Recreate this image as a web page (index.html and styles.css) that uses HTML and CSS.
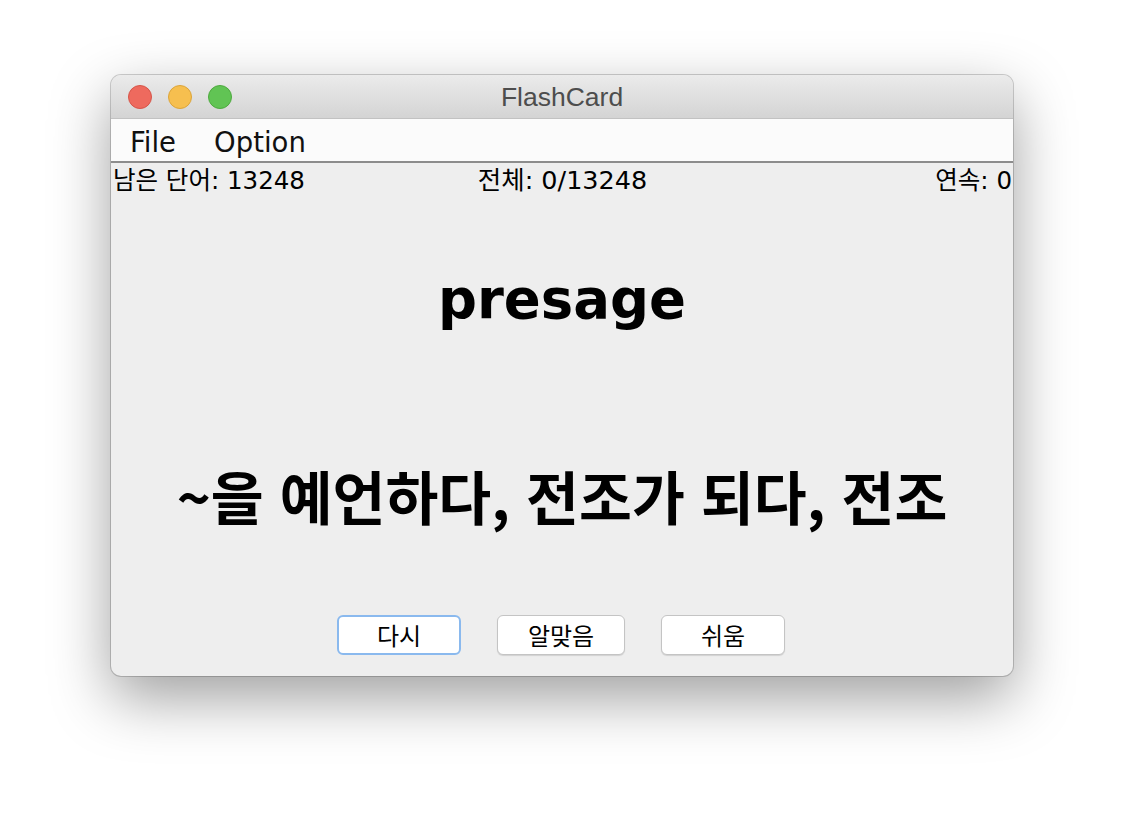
FILE: index.html
```html
<!DOCTYPE html>
<html lang="ko">
<head>
<meta charset="utf-8">
<title>FlashCard</title>
<link rel="stylesheet" href="styles.css">
</head>
<body>
<div class="window">
  <div class="titlebar">
    <div class="lights">
      <span class="light red"></span>
      <span class="light yellow"></span>
      <span class="light green"></span>
    </div>
    <div class="title">FlashCard</div>
  </div>
  <div class="menubar">
    <span class="menu">File</span>
    <span class="menu">Option</span>
  </div>
  <div class="content">
    <div class="status">
      <span class="st-left">남은 단어: 13248</span>
      <span class="st-mid">전체: 0/13248</span>
      <span class="st-right">연속: 0</span>
    </div>
    <div class="word">presage</div>
    <div class="meaning">~을 예언하다, 전조가 되다, 전조</div>
    <div class="buttons">
      <button class="btn focused">다시</button>
      <button class="btn wide">알맞음</button>
      <button class="btn">쉬움</button>
    </div>
  </div>
</div>
</body>
</html>
```

FILE: styles.css
```css
html, body {
  margin: 0;
  padding: 0;
  background: #ffffff;
}
body {
  width: 1124px;
  height: 824px;
  overflow: hidden;
  font-family: "DejaVu Sans", "Noto Sans CJK KR", sans-serif;
}
.window {
  margin: 75px 0 0 111px;
  width: 902px;
  height: 601px;
  border-radius: 10px;
  overflow: hidden;
  background: #eeeeee;
  box-shadow: 0 0 0 1px rgba(0,0,0,0.18), 0 22px 60px rgba(0,0,0,0.38);
  display: flex;
  flex-direction: column;
}
.titlebar {
  height: 44px;
  flex: none;
  background: linear-gradient(#ebebeb, #d4d4d4);
  border-bottom: 1px solid #c2c2c2;
  box-sizing: border-box;
  display: grid;
  grid-template-columns: 1fr auto 1fr;
  align-items: center;
}
.lights {
  display: flex;
  gap: 16px;
  padding-left: 17px;
}
.light {
  width: 24px;
  height: 24px;
  border-radius: 50%;
  box-sizing: border-box;
}
.red { background: #ee6a5e; border: 1px solid #d55549; }
.yellow { background: #f6bf4f; border: 1px solid #dba43a; }
.green { background: #61c454; border: 1px solid #4ea93f; }
.title {
  font-family: "Liberation Sans", Arial, sans-serif;
  font-size: 26.5px;
  color: #4d4d4d;
  padding-top: 2px;
}
.menubar {
  height: 44px;
  flex: none;
  background: #fbfbfb;
  border-bottom: 2px solid #8c8c8c;
  box-sizing: border-box;
  display: flex;
  align-items: center;
  gap: 38px;
  padding: 3px 0 0 19px;
  font-size: 27.5px;
  color: #111;
}
.content {
  flex: 1;
  display: flex;
  flex-direction: column;
}
.status {
  height: 36px;
  flex: none;
  display: grid;
  grid-template-columns: 1fr auto 1fr;
  align-items: center;
  padding: 0 1px 0 2px;
  font-size: 24.5px;
  color: #000;
  line-height: 1;
}
.st-left { justify-self: start; }
.st-mid { font-size: 25.5px; }
.st-right { justify-self: end; }
.word {
  height: 200px;
  display: flex;
  align-items: center;
  justify-content: center;
  font-weight: bold;
  font-size: 54.5px;
  color: #000;
}
.meaning {
  height: 201px;
  display: flex;
  align-items: center;
  justify-content: center;
  padding-bottom: 9px;
  box-sizing: border-box;
  font-family: "Noto Sans CJK KR", sans-serif;
  font-weight: bold;
  font-size: 57.5px;
  color: #000;
}
.buttons {
  display: flex;
  justify-content: center;
  gap: 36px;
  padding: 15px 0 0 0;
  margin-left: -2px;
}
.btn {
  width: 124px;
  height: 40px;
  box-sizing: border-box;
  background: #ffffff;
  border: 1px solid #c4c4c4;
  border-radius: 6px;
  box-shadow: 0 1px 1px rgba(0,0,0,0.12);
  font-family: "Noto Sans CJK KR", sans-serif;
  font-size: 24px;
  color: #000;
  padding: 0;
  margin: 0;
  line-height: 1;
}
.btn.wide { width: 128px; }
.btn.focused {
  border: 2px solid #8ab9ee;
  box-shadow: none;
}
```
